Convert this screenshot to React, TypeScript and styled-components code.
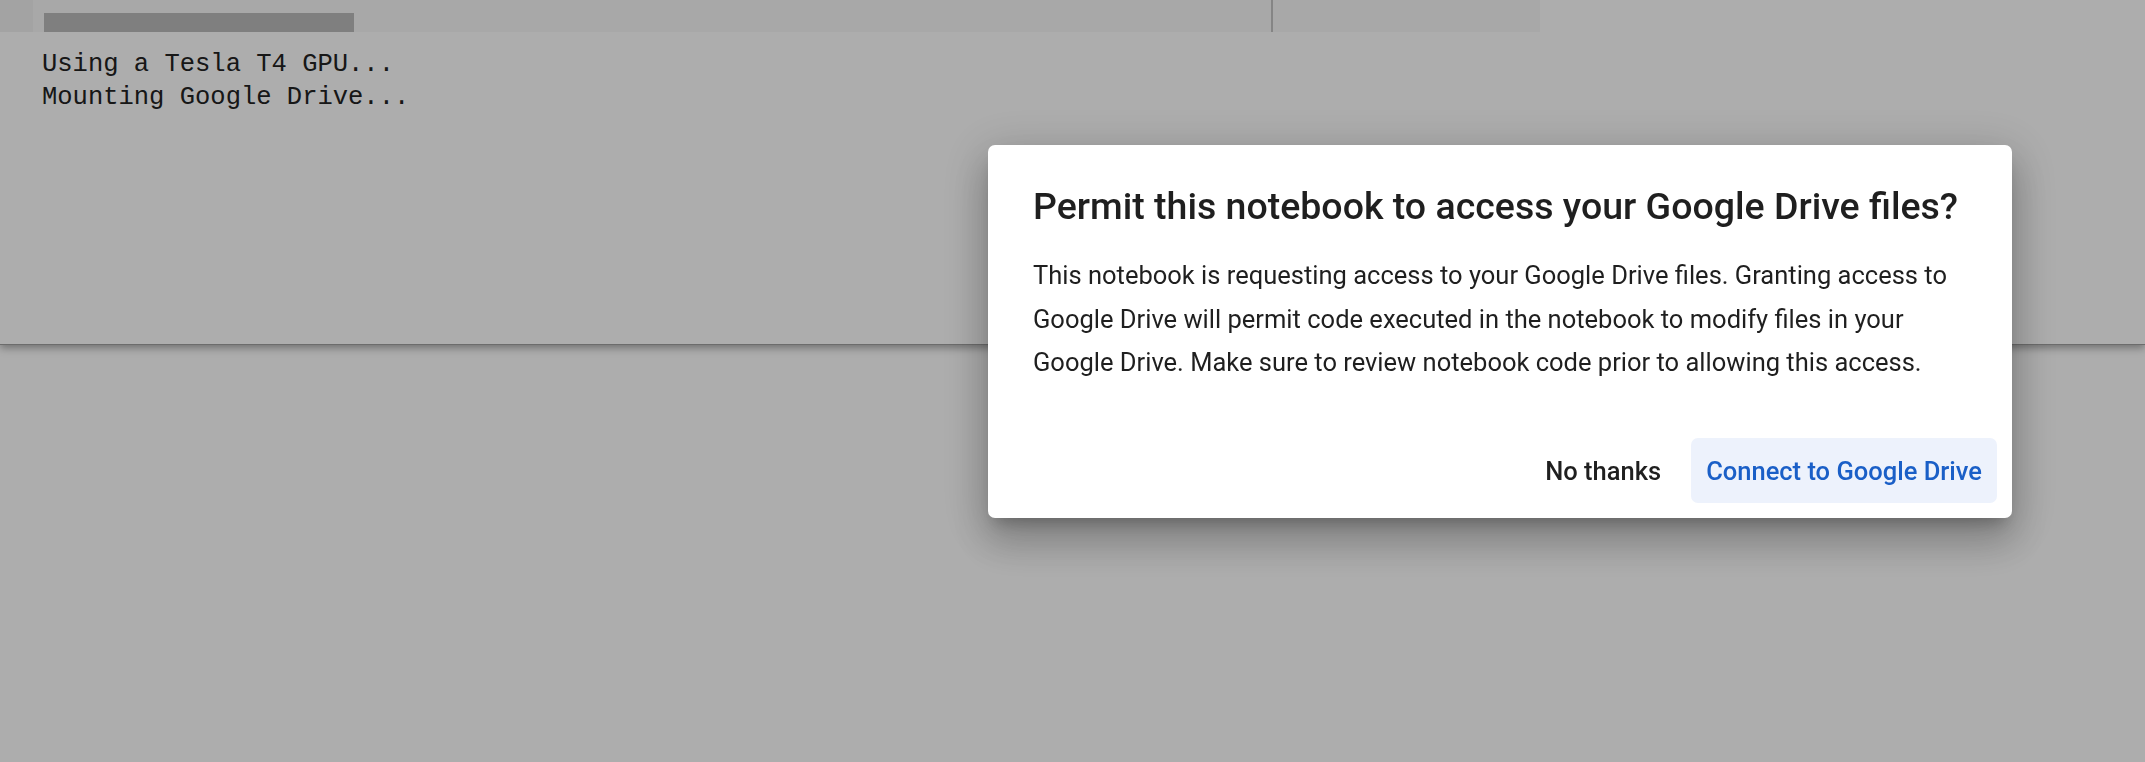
import React from "react";
import styled, { createGlobalStyle } from "styled-components";

const GlobalStyle = createGlobalStyle`
  html, body {
    margin: 0;
    padding: 0;
    background: #ffffff;
  }
  body {
    font-family: Roboto, "Noto Sans", Arial, sans-serif;
    overflow: hidden;
  }
`;

const Page = styled.div`
  min-height: 762px;
  background: #ffffff;
`;

const Cell = styled.section`
  position: relative;
  display: flex;
  flex-direction: column;
  height: 345px;
  box-sizing: border-box;
  background: #ffffff;
  border-bottom: 1px solid #a0a0a0;
  box-shadow: 0 3px 8px rgba(0, 0, 0, 0.35);
`;

const EditorRow = styled.div`
  display: flex;
  width: 1540px;
  height: 32px;
  flex: none;
`;

const Gutter = styled.div`
  width: 33px;
  background: #f1f1f1;
`;

const EditorStrip = styled.div`
  flex: 1;
  display: flex;
  align-items: flex-end;
  padding-left: 11px;
  background: #f8f8f8;
`;

const ProgressBar = styled.div`
  width: 310px;
  height: 19px;
  background: #bbbbbb;
`;

const Spacer = styled.div`
  flex: 1;
`;

const SplitLine = styled.div`
  width: 2px;
  align-self: stretch;
  background: #c4c4c4;
`;

const SidePane = styled.div`
  width: 267px;
`;

const Output = styled.pre`
  margin: 0;
  padding: 16px 42px;
  font-family: "Liberation Mono", "Courier New", monospace;
  font-size: 25.5px;
  line-height: 33px;
  color: #222222;
`;

const Scrim = styled.div`
  position: fixed;
  inset: 0;
  background: rgba(0, 0, 0, 0.32);
`;

const Dialog = styled.div`
  position: fixed;
  left: 988px;
  top: 145px;
  width: 1024px;
  height: 373px;
  box-sizing: border-box;
  padding: 39px 15px 15px 45px;
  display: flex;
  flex-direction: column;
  background: #ffffff;
  border-radius: 7px;
  box-shadow: 0 11px 15px -7px rgba(0, 0, 0, 0.24),
    0 24px 38px 3px rgba(0, 0, 0, 0.17), 0 9px 46px 8px rgba(0, 0, 0, 0.15);
`;

const Title = styled.h2`
  margin: 0;
  white-space: nowrap;
  font-family: Roboto, "Noto Sans", sans-serif;
  font-weight: 500;
  font-size: 37.5px;
  line-height: 44px;
  color: #1f1f1f;
`;

const Body = styled.p`
  margin: 26px 0 0;
  padding-right: 30px;
  font-family: Roboto, "Noto Sans", sans-serif;
  font-weight: 400;
  font-size: 25.5px;
  line-height: 43.6px;
  color: #1f1f1f;
`;

const Actions = styled.div`
  margin-top: auto;
  display: flex;
  justify-content: flex-end;
  gap: 15px;
`;

const ActionButton = styled.button<{ $tonal?: boolean }>`
  height: 65px;
  padding: 0 15px;
  border: none;
  border-radius: 7px;
  font-family: Roboto, "Noto Sans", sans-serif;
  font-weight: 500;
  font-size: 25.5px;
  background: ${(p) => (p.$tonal ? "#edf2fc" : "transparent")};
  color: ${(p) => (p.$tonal ? "#1a5fc7" : "#1f1f1f")};
  cursor: pointer;
`;

export default function App() {
  return (
    <Page>
      <GlobalStyle />
      <Cell>
        <EditorRow>
          <Gutter />
          <EditorStrip>
            <ProgressBar />
            <Spacer />
            <SplitLine />
            <SidePane />
          </EditorStrip>
        </EditorRow>
        <Output>{"Using a Tesla T4 GPU...\nMounting Google Drive..."}</Output>
      </Cell>
      <Scrim />
      <Dialog role="dialog" aria-modal="true">
        <Title>Permit this notebook to access your Google Drive files?</Title>
        <Body>
          This notebook is requesting access to your Google Drive files. Granting
          access to Google Drive will permit code executed in the notebook to
          modify files in your Google Drive. Make sure to review notebook code
          prior to allowing this access.
        </Body>
        <Actions>
          <ActionButton>No thanks</ActionButton>
          <ActionButton $tonal>Connect to Google Drive</ActionButton>
        </Actions>
      </Dialog>
    </Page>
  );
}
